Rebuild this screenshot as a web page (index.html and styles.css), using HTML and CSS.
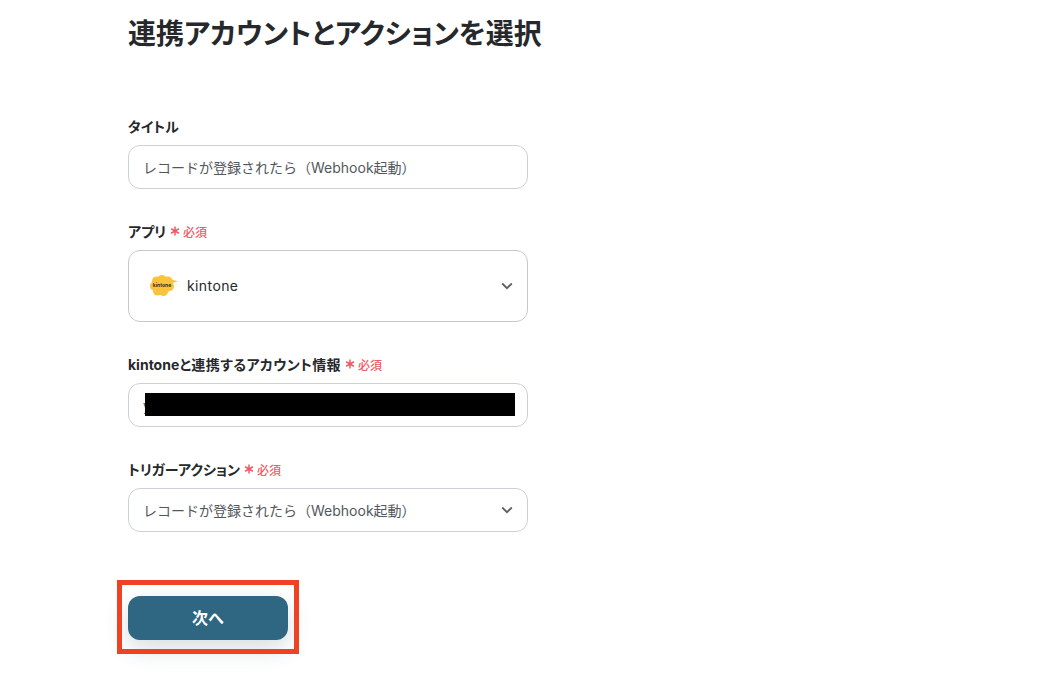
FILE: index.html
```html
<!DOCTYPE html>
<html lang="ja">

<head>
    <meta charset="UTF-8">
    <meta name="viewport" content="width=device-width, initial-scale=1.0">
    <title>連携アカウントとアクションを選択</title>
    <link rel="stylesheet" href="styles.css">
</head>

<body>
    <main class="page">
        <h1 class="page-title">連携アカウントとアクションを選択</h1>

        <form class="form">
            <div class="field">
                <div class="field-label">タイトル</div>
                <div class="input">レコードが登録されたら（Webhook起動）</div>
            </div>

            <div class="field">
                <div class="field-label">アプリ
                    <span class="required">
                        <svg class="required-mark" viewBox="0 0 10 10" aria-hidden="true">
                            <path d="M5 0.500 V9.500 M1.100 2.750 L8.900 7.250 M1.100 7.250 L8.900 2.750" />
                        </svg>必須
                    </span>
                </div>
                <div class="input input-app">
                    <svg class="app-logo" viewBox="0 0 28 21" aria-hidden="true">
                        <g fill="#fbc33c">
                            <circle cx="12" cy="10.500" r="9" />
                            <circle cx="6.500" cy="6" r="4.500" />
                            <circle cx="12" cy="4.500" r="4.500" />
                            <circle cx="18" cy="6" r="4.500" />
                            <circle cx="4.500" cy="11" r="4.500" />
                            <circle cx="19.500" cy="11.500" r="4.500" />
                            <circle cx="7.500" cy="16" r="4.500" />
                            <circle cx="13.500" cy="16.500" r="4.500" />
                            <path d="M20 4 L28 6.500 L20 8.500 Z" />
                        </g>
                        <text class="app-logo-text" x="12" y="12" text-anchor="middle">kintone</text>
                    </svg>
                    <span class="app-name">kintone</span>
                    <svg class="chevron" viewBox="0 0 12 8" aria-hidden="true">
                        <path d="M1.200 1.500 L6 6.200 L10.800 1.500" />
                    </svg>
                </div>
            </div>

            <div class="field">
                <div class="field-label">kintone<span class="label-wide">と連携するアカウント情報</span>
                    <span class="required">
                        <svg class="required-mark" viewBox="0 0 10 10" aria-hidden="true">
                            <path d="M5 0.500 V9.500 M1.100 2.750 L8.900 7.250 M1.100 7.250 L8.900 2.750" />
                        </svg>必須
                    </span>
                </div>
                <div class="input input-masked">
                    <span class="masked-text">y</span>
                    <div class="mask"></div>
                </div>
            </div>

            <div class="field">
                <div class="field-label">トリガーアクション
                    <span class="required">
                        <svg class="required-mark" viewBox="0 0 10 10" aria-hidden="true">
                            <path d="M5 0.500 V9.500 M1.100 2.750 L8.900 7.250 M1.100 7.250 L8.900 2.750" />
                        </svg>必須
                    </span>
                </div>
                <div class="input">
                    レコードが登録されたら（Webhook起動）
                    <svg class="chevron" viewBox="0 0 12 8" aria-hidden="true">
                        <path d="M1.200 1.500 L6 6.200 L10.800 1.500" />
                    </svg>
                </div>
            </div>

            <div class="actions">
                <button type="button" class="next-button">次へ</button>
                <div class="highlight"></div>
            </div>
        </form>
    </main>
</body>

</html>
```

FILE: styles.css
```css
* {
    box-sizing: border-box;
}

body {
    margin: 0;
    background-color: #fff;
    color: #26282b;
    font-family: Inter, "Noto Sans CJK JP", sans-serif;
    font-feature-settings: "palt";
}

.page {
    padding: 14px 0 0 128px;
    height: 676px;
    overflow: hidden;
}

.page-title {
    margin: 0;
    font-size: 28px;
    line-height: 40px;
    font-weight: 700;
}

.form {
    width: 400px;
    margin-top: 62px;
}

.field {
    margin-bottom: 32px;
}

.field-label {
    display: flex;
    align-items: center;
    height: 20px;
    margin-bottom: 9px;
    font-size: 14px;
    font-weight: 700;
}

.label-wide {
    letter-spacing: 0.4px;
}

.required {
    display: flex;
    align-items: center;
    margin-left: 4px;
    color: #ef5a64;
    font-size: 12px;
    font-weight: 500;
}

.required-mark {
    width: 10px;
    height: 10px;
    margin-right: 3px;
    fill: none;
    stroke: #ef5a64;
    stroke-width: 1.500;
}

.input {
    position: relative;
    display: flex;
    align-items: center;
    height: 44px;
    padding: 0 14px;
    border: 1px solid #ccd0d8;
    border-radius: 12px;
    background-color: #fff;
    color: #53575c;
    font-size: 14px;
    font-feature-settings: normal;
}

.input-app {
    height: 72px;
    padding: 0 0 1px 21px;
    border-color: #c6c8cc;
    color: #26282b;
}

.app-logo {
    width: 28px;
    height: 21px;
    flex-shrink: 0;
}

.app-logo-text {
    font-size: 5px;
    font-weight: 700;
    fill: #3a3020;
}

.app-name {
    margin-left: 9px;
    letter-spacing: 0.4px;
}

.chevron {
    position: absolute;
    right: 14px;
    top: 50%;
    width: 12px;
    height: 8px;
    margin-top: -4px;
    fill: none;
    stroke: #5c5f64;
    stroke-width: 1.800;
}

.masked-text {
    color: #53575c;
}

.mask {
    position: absolute;
    left: 16px;
    top: 9px;
    width: 370px;
    height: 23px;
    background-color: #000;
}

.actions {
    position: relative;
    margin-top: 64px;
    width: 160px;
}

.next-button {
    display: block;
    width: 160px;
    height: 44px;
    padding: 0 0 2px;
    border: none;
    border-radius: 12px;
    background-color: #2f6782;
    box-shadow: 0 8px 24px rgba(47, 80, 100, 0.2);
    color: #fff;
    font-family: inherit;
    font-feature-settings: normal;
    font-size: 16px;
    font-weight: 700;
}

.highlight {
    position: absolute;
    left: -11px;
    top: -16px;
    width: 182px;
    height: 74px;
    border: 5px solid #ef4123;
}
```
